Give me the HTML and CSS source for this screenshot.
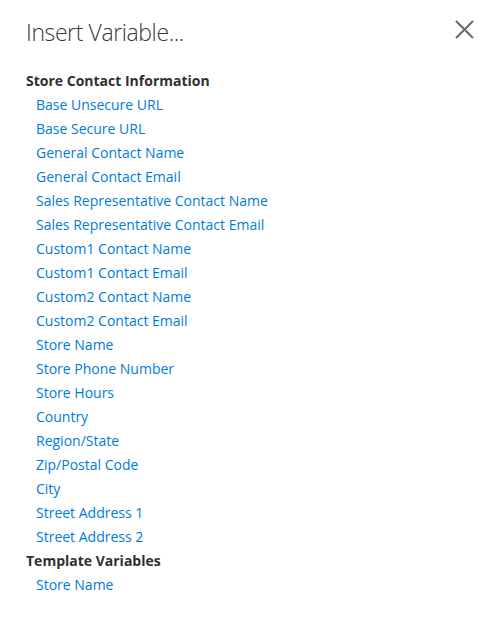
FILE: index.html
```html
<!DOCTYPE html>
<html>
<head>
	<meta charset="utf-8">
	<title>Insert Variable</title>
	<link rel="stylesheet" href="styles.css">
</head>
<body>
<div class="modal">
	<div class="modal-header">
		<h1 class="modal-title">Insert Variable...</h1>
		<button class="action-close" type="button" title="Close">
			<svg width="19" height="19" viewBox="0 0 19 19"><path d="M1 1L18 18M18 1L1 18" stroke="#6f6560" stroke-width="2" fill="none"/></svg>
		</button>
	</div>
	<div class="modal-content">
		<div class="var-group">Store Contact Information</div>
		<a class="var-link" href="#">Base Unsecure URL</a>
		<a class="var-link" href="#">Base Secure URL</a>
		<a class="var-link" href="#">General Contact Name</a>
		<a class="var-link" href="#">General Contact Email</a>
		<a class="var-link" href="#">Sales Representative Contact Name</a>
		<a class="var-link" href="#">Sales Representative Contact Email</a>
		<a class="var-link" href="#">Custom1 Contact Name</a>
		<a class="var-link" href="#">Custom1 Contact Email</a>
		<a class="var-link" href="#">Custom2 Contact Name</a>
		<a class="var-link" href="#">Custom2 Contact Email</a>
		<a class="var-link" href="#">Store Name</a>
		<a class="var-link" href="#">Store Phone Number</a>
		<a class="var-link" href="#">Store Hours</a>
		<a class="var-link" href="#">Country</a>
		<a class="var-link" href="#">Region/State</a>
		<a class="var-link" href="#">Zip/Postal Code</a>
		<a class="var-link" href="#">City</a>
		<a class="var-link" href="#">Street Address 1</a>
		<a class="var-link" href="#">Street Address 2</a>
		<div class="var-group">Template Variables</div>
		<a class="var-link" href="#">Store Name</a>
	</div>
</div>
</body>
</html>
```

FILE: styles.css
```css
body {margin: 0; background: #fff; font-family: "Open Sans", "Noto Sans", sans-serif; color: #41362f;}
.modal {padding: 0 26px;}
.modal-header {display: flex; justify-content: space-between; align-items: flex-start; padding-top: 17px;}
.modal-title {margin: 0; font-size: 23px; font-weight: 300; letter-spacing: -0.4px; line-height: 31px; color: #41362f;}
.action-close {border: 0; background: none; padding: 0; margin: 3px 2px 0 0; cursor: pointer;}
.action-close svg {display: block;}
.modal-content {padding-top: 21px;}
.var-group {font-size: 14px; font-weight: 700; line-height: 24px; color: #303030;}
.var-link {display: block; width: max-content; margin-left: 10px; font-size: 14px; line-height: 24px; color: #007bdb; text-decoration: none;}
```
